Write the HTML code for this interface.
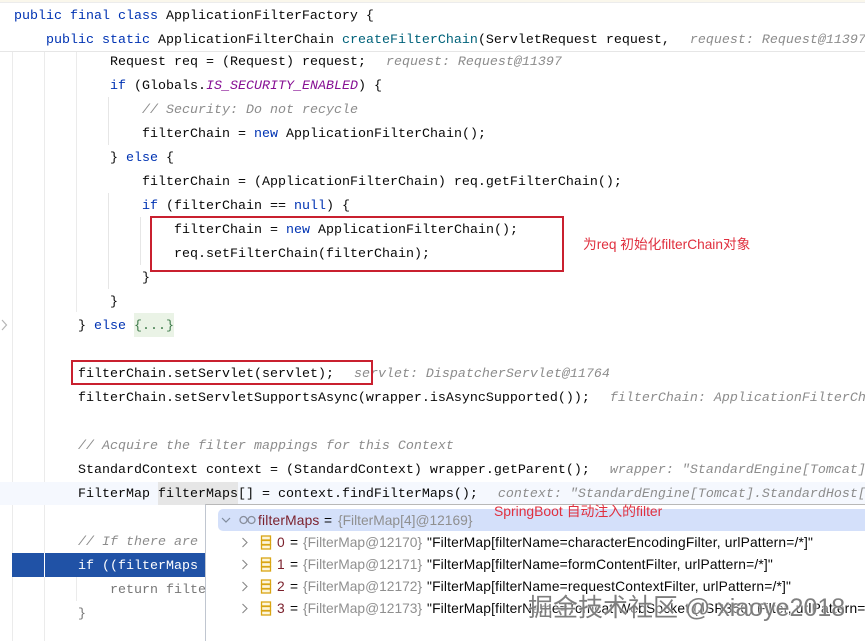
<!DOCTYPE html>
<html><head><meta charset="utf-8">
<style>
html,body{margin:0;padding:0;background:#fff}
#p{position:relative;width:865px;height:641px;overflow:hidden;background:#fff;font-family:"Liberation Mono",monospace;font-size:13.333px;color:#080808}
.l{position:absolute;white-space:pre;height:24px;line-height:24px;margin-top:2px}
.k{color:#0033b3}.m{color:#00627a}.c{color:#8c8c8c;font-style:italic}.h{color:#8c8c8c;font-style:italic;margin-left:4px}.s{color:#871094;font-style:italic}
.b{position:absolute}
.t{position:absolute;white-space:pre;font-family:"Liberation Sans",sans-serif;font-size:13.8px;letter-spacing:.17px;line-height:22px;height:22px}
.g{color:#8f8f8f;letter-spacing:0}.n{color:#7a1f2b}
</style></head><body>
<div id="p">
<div class="b" style="left:0;top:0;width:865px;height:2px;background:#faf7ec"></div>
<div class="b" style="left:0;top:2px;width:865px;height:1px;background:#ececec"></div>
<div class="b" style="left:0;top:51px;width:865px;height:1px;background:#e6e6e6"></div>
<div class="b" style="left:12px;top:52px;width:1px;height:589px;background:#ebebeb"></div>
<div class="b" style="left:44px;top:52px;width:1px;height:589px;background:#ebebeb"></div>
<div class="b" style="left:76px;top:52px;width:1px;height:260px;background:#ebebeb"></div>
<div class="b" style="left:108px;top:97px;width:1px;height:48px;background:#e6e6e6"></div>
<div class="b" style="left:108px;top:193px;width:1px;height:96px;background:#e6e6e6"></div>
<div class="b" style="left:140px;top:217px;width:1px;height:48px;background:#e6e6e6"></div>
<div class="b" style="left:76px;top:577px;width:1px;height:24px;background:#ebebeb"></div>
<div class="b" style="left:0;top:482px;width:865px;height:23px;background:#f5f8fe"></div>
<div class="b" style="left:158px;top:482px;width:80px;height:23px;background:#e6e6e6"></div>
<div class="b" style="left:134px;top:313px;width:40px;height:24px;background:#eaf3e6"></div>
<div class="b" style="left:12px;top:553px;width:193px;height:24px;background:#2052a6"></div>
<div class="b" style="left:44px;top:553px;width:1px;height:24px;background:#fff"></div>

<div class="l" style="left:14px;top:3px"><span class="k">public final class</span> ApplicationFilterFactory {</div>
<div class="l" style="left:46px;top:27px"><span class="k">public static</span> ApplicationFilterChain <span class="m">createFilterChain</span>(ServletRequest request,  <span class="h">request: Request@11397</span></div>
<div class="l" style="left:110px;top:49px">Request req = (Request) request;  <span class="h">request: Request@11397</span></div>
<div class="l" style="left:110px;top:73px"><span class="k">if</span> (Globals.<span class="s">IS_SECURITY_ENABLED</span>) {</div>
<div class="l c" style="left:142px;top:97px">// Security: Do not recycle</div>
<div class="l" style="left:142px;top:121px">filterChain = <span class="k">new</span> ApplicationFilterChain();</div>
<div class="l" style="left:110px;top:145px">} <span class="k">else</span> {</div>
<div class="l" style="left:142px;top:169px">filterChain = (ApplicationFilterChain) req.getFilterChain();</div>
<div class="l" style="left:142px;top:193px"><span class="k">if</span> (filterChain == <span class="k">null</span>) {</div>
<div class="l" style="left:174px;top:217px">filterChain = <span class="k">new</span> ApplicationFilterChain();</div>
<div class="l" style="left:174px;top:241px">req.setFilterChain(filterChain);</div>
<div class="l" style="left:142px;top:265px">}</div>
<div class="l" style="left:110px;top:289px">}</div>
<div class="l" style="left:78px;top:313px">} <span class="k">else</span> <span style="color:#3d7a4a">{...}</span></div>
<div class="l" style="left:78px;top:361px">filterChain.setServlet(servlet);  <span class="h">servlet: DispatcherServlet@11764</span></div>
<div class="l" style="left:78px;top:385px">filterChain.setServletSupportsAsync(wrapper.isAsyncSupported());  <span class="h">filterChain: ApplicationFilterChain@11</span></div>
<div class="l c" style="left:78px;top:433px">// Acquire the filter mappings for this Context</div>
<div class="l" style="left:78px;top:457px">StandardContext context = (StandardContext) wrapper.getParent();  <span class="h">wrapper: "StandardEngine[Tomcat].Standar</span></div>
<div class="l" style="left:78px;top:481px">FilterMap filterMaps[] = context.findFilterMaps();  <span class="h">context: "StandardEngine[Tomcat].StandardHost[</span></div>
<div class="l c" style="left:78px;top:529px">// If there are</div>
<div class="l" style="left:78px;top:553px;color:#fff">if ((filterMaps</div>
<div class="l" style="left:110px;top:577px;color:#777">return filte</div>
<div class="l" style="left:78px;top:601px;color:#777">}</div>

<svg class="b" style="left:0;top:318px" width="10" height="14"><path d="M2 2l4.500 5-4.500 5" fill="none" stroke="#b5b5b5" stroke-width="1.200"/></svg>

<div class="b" style="left:150px;top:216px;width:410px;height:52px;border:2px solid #c9202f"></div>
<div class="b" style="left:71px;top:360px;width:298px;height:21px;border:2px solid #c9202f"></div>

<div class="b" style="left:205px;top:504px;width:660px;height:137px;background:#fff;border-left:1px solid #c0c6d0;border-top:1px solid #b8b8b8;box-sizing:border-box"></div>
<div class="b" style="left:218px;top:509px;width:647px;height:22px;background:#d4e0fa;border-radius:5px 0 0 5px"></div>

<svg class="b" style="left:205px;top:505px" width="70" height="125" fill="none">
<path d="M17 13l4 4 4-4" stroke="#7f8b9c" stroke-width="1.200"/>
<g stroke="#888e9c" stroke-width="1.300"><circle cx="38.500" cy="15" r="3.500"/><circle cx="46.500" cy="15" r="3.500"/></g>
<g stroke="#888" stroke-width="1.100"><path d="M37.500 33l4.500 4.500-4.500 4.500M37.500 55l4.500 4.500-4.500 4.500M37.500 77l4.500 4.500-4.500 4.500M37.500 99l4.500 4.500-4.500 4.500"/></g>
<g stroke="#d9a514" stroke-width="1.300" fill="#fdf6dc">
<rect x="56.500" y="31" width="9" height="4"/><rect x="56.500" y="35.500" width="9" height="4"/><rect x="56.500" y="40" width="9" height="4"/>
<rect x="56.500" y="53" width="9" height="4"/><rect x="56.500" y="57.500" width="9" height="4"/><rect x="56.500" y="62" width="9" height="4"/>
<rect x="56.500" y="75" width="9" height="4"/><rect x="56.500" y="79.500" width="9" height="4"/><rect x="56.500" y="84" width="9" height="4"/>
<rect x="56.500" y="97" width="9" height="4"/><rect x="56.500" y="101.500" width="9" height="4"/><rect x="56.500" y="106" width="9" height="4"/>
</g></svg>

<div class="t" style="left:258px;top:510px"><span class="n">filterMaps</span></div><div class="t" style="left:324px;top:510px">=</div><div class="t g" style="left:338px;top:510px">{FilterMap[4]@12169}</div>

<div class="t n" style="left:277px;top:532px">0</div><div class="t" style="left:290px;top:532px">=</div><div class="t g" style="left:303px;top:532px">{FilterMap@12170}</div><div class="t" style="left:427px;top:532px">"FilterMap[filterName=characterEncodingFilter, urlPattern=/*]"</div>
<div class="t n" style="left:277px;top:554px">1</div><div class="t" style="left:290px;top:554px">=</div><div class="t g" style="left:303px;top:554px">{FilterMap@12171}</div><div class="t" style="left:427px;top:554px">"FilterMap[filterName=formContentFilter, urlPattern=/*]"</div>
<div class="t n" style="left:277px;top:576px">2</div><div class="t" style="left:290px;top:576px">=</div><div class="t g" style="left:303px;top:576px">{FilterMap@12172}</div><div class="t" style="left:427px;top:576px">"FilterMap[filterName=requestContextFilter, urlPattern=/*]"</div>
<div class="t n" style="left:277px;top:598px">3</div><div class="t" style="left:290px;top:598px">=</div><div class="t g" style="left:303px;top:598px">{FilterMap@12173}</div><div class="t" style="left:427px;top:598px">"FilterMap[filterName=Tomcat WebSocket (JSR356) Filter, urlPattern=/*]"</div>

<div class="t" style="left:583px;top:234px;font-family:'Liberation Sans','Noto Sans CJK SC',sans-serif;font-size:13.7px;letter-spacing:0;color:#e0303f">为req 初始化filterChain对象</div>
<div class="t" style="left:494px;top:500px;font-family:'Liberation Sans','Noto Sans CJK SC',sans-serif;font-size:13.9px;letter-spacing:0;color:#e0303f">SpringBoot 自动注入的filter</div>

<div class="t" style="left:528px;top:593px;height:30px;line-height:30px;font-family:'Liberation Sans','Noto Sans CJK SC',sans-serif;font-size:25px;letter-spacing:0;color:rgba(95,95,95,.8);text-shadow:0 0 2px #fff,0 0 2px #fff">掘金技术社区 @ xiaoye2018</div>
</div>
</body></html>
